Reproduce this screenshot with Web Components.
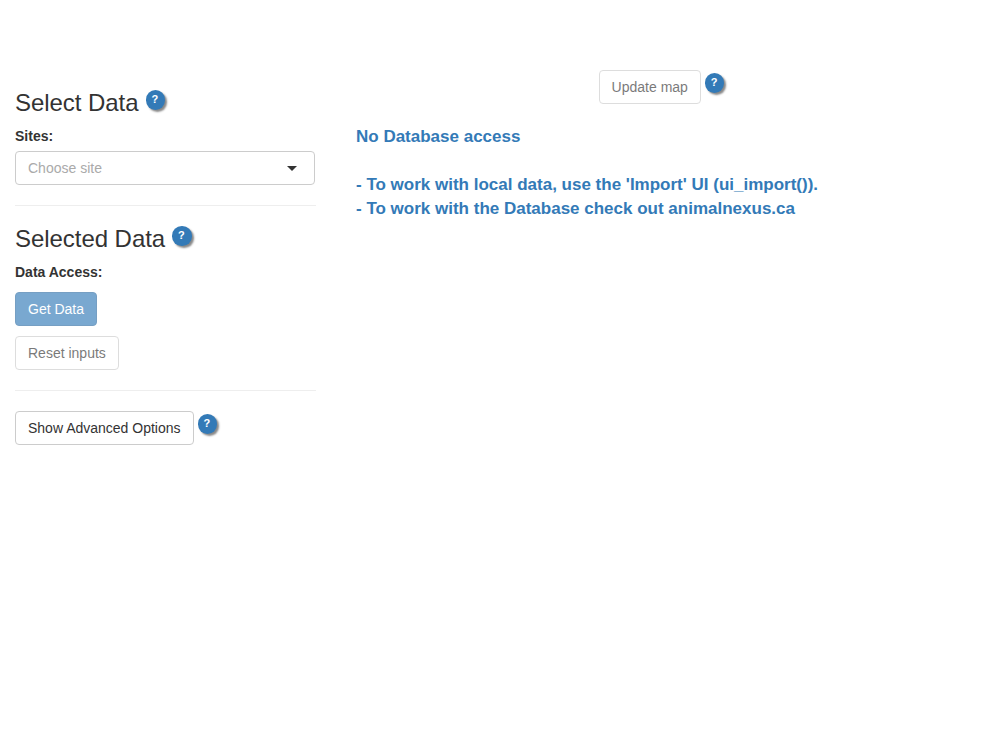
<!DOCTYPE html>
<html lang="en"><head><meta charset="utf-8"><title>Map data</title>
<style>
body{margin:0;background:#fff;color:#333;font:14px/20px "Liberation Sans",Arial,sans-serif}
</style></head><body>
<data-app></data-app>
<script>
const define=(name,html)=>{
  const t=document.createElement('template');t.innerHTML=html;
  customElements.define(name,class extends HTMLElement{
    constructor(){super();this.attachShadow({mode:'open'}).append(t.content.cloneNode(true));}
  });
};
define('help-badge',`<style>
:host{display:inline-block;box-sizing:border-box;width:19.5px;height:19.5px;padding-right:1px;border-radius:50%;background:#337ab7;color:#fff;font-size:11px;font-weight:700;line-height:19px;text-align:center;box-shadow:2px 2px 2px #888}
</style><slot></slot>`);
define('ui-button',`<style>
:host{display:inline-block}
button{display:block;box-sizing:border-box;height:34px;margin:0;padding:6px 12px;border:1px solid #ccc;border-radius:4px;background:#fff;color:#333;font:inherit;line-height:20px;white-space:nowrap}
:host([muted]) button{opacity:.65}
:host([primary]) button{background:#337ab7;border-color:#2e6da4;color:#fff}
</style><button type="button"><slot></slot></button>`);
define('section-title',`<style>
:host{display:flex;align-items:flex-start;gap:7px;height:26px}
h3{margin:0;font-size:24px;line-height:26px;font-weight:400;letter-spacing:-.05px;white-space:nowrap}
</style><h3><slot></slot></h3><help-badge>?</help-badge>`);
define('field-label',`<style>:host{display:block;font-weight:700;height:20px}</style><slot></slot>`);
define('select-box',`<style>
:host{display:flex;box-sizing:border-box;width:300px;height:34px;padding:6px 17px 6px 12px;border:1px solid #ccc;border-radius:4px;align-items:center;justify-content:space-between;color:#aaa}
i{border:5px solid transparent;border-top-color:#333;border-bottom:0}
</style><span><slot></slot></span><i></i>`);
define('side-rule',`<style>:host{display:block;height:1px;background:#eee;margin:20px 0}</style>`);
define('data-sidebar',`<style>
:host{display:block;width:301px;padding:90px 0 0 15px}
field-label{margin-top:10px}
select-box{margin-top:5px}
.stack{display:flex;flex-direction:column;align-items:flex-start;gap:10px;margin-top:10px}
.row{display:flex;gap:4px}.row help-badge{margin-top:3px}
</style>
<section-title>Select Data</section-title><field-label>Sites:</field-label><select-box>Choose site</select-box><side-rule></side-rule>
<section-title>Selected Data</section-title><field-label>Data Access:</field-label>
<div class="stack"><ui-button primary muted>Get Data</ui-button><ui-button muted>Reset inputs</ui-button></div><side-rule></side-rule>
<div class="row"><ui-button>Show Advanced Options</ui-button><help-badge>?</help-badge></div>`);
define('map-panel',`<style>
:host{display:block;flex:1;padding:70px 25px 0 40px}
.top{display:flex;justify-content:center;gap:4px}.top help-badge{margin-top:3px}
.msg{margin-top:21px;color:#337ab7;font-size:17px;line-height:24px;font-weight:700}
p{margin:0;white-space:nowrap}p+p{margin-top:24px}p+p+p{margin-top:0}
</style><div class="top"><ui-button muted>Update map</ui-button><help-badge>?</help-badge></div>
<div class="msg"><p>No Database access</p><p>- To work with local data, use the 'Import' UI (ui_import()).</p><p>- To work with the Database check out animalnexus.ca</p></div>`);
define('data-app',`<style>:host{display:flex;min-height:744px}</style><data-sidebar></data-sidebar><map-panel></map-panel>`);
</script></body></html>
